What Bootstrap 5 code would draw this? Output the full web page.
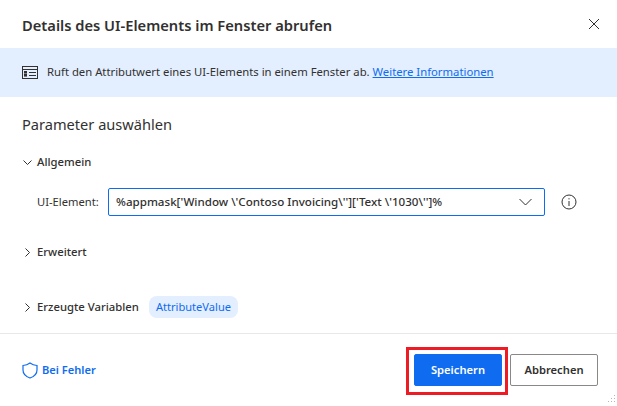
<!DOCTYPE html>
<html lang="de">
<head>
  <meta charset="UTF-8">
  <meta name="viewport" content="width=device-width, initial-scale=1.0">
  <title>Details des UI-Elements im Fenster abrufen</title>
  <link href="https://cdn.jsdelivr.net/npm/bootstrap@5.3.0/dist/css/bootstrap.min.css" rel="stylesheet">
  <style>
    html, body {
      height: 100%;
    }
    body {
      font-family: "Noto Sans", "Open Sans", sans-serif;
      font-size: 11.2px;
      color: #323130;
      background: #fff;
      overflow: hidden;
    }
    .dlg {
      width: 617px;
      height: 406px;
      position: relative;
    }
    .dlg-head {
      height: 48px;
      padding: 0 17px 0 22px;
    }
    .dlg-title {
      font-size: 14.7px;
      font-weight: 600;
      line-height: 20px;
      margin: 2px 0 0;
    }
    .info-band {
      height: 49px;
      padding-left: 22px;
      gap: 9px;
      background: #e3eeff;
      font-size: 11.3px;
    }
    .info-band a {
      color: #0f6cf0;
    }
    .param-title {
      font-size: 14.6px;
      line-height: 20px;
      margin: 17px 0 0 22px;
      font-weight: 400;
    }
    .sec-row {
      padding-left: 23px;
      height: 20px;
      gap: 5px;
      font-weight: 500;
      font-size: 11.3px;
    }
    .sec-row svg {
      flex: none;
    }
    .sec-general {
      margin-top: 18px;
    }
    .sec-advanced {
      margin-top: 25px;
    }
    .sec-vars {
      margin-top: 35px;
    }
    .field-row {
      height: 30px;
      padding-left: 37px;
      margin-top: 15px;
    }
    .field-label {
      width: 71px;
      flex: none;
      font-size: 11.2px;
    }
    .fake-combo {
      width: 437px;
      height: 28px;
      border: 1px solid #0f6cf0;
      border-radius: 2px;
      padding: 0 12px 0 7px;
      font-size: 11.6px;
      font-weight: 500;
    }
    .var-pill {
      background: #e3eeff;
      color: #0f6cf0;
      border-radius: 8px;
      height: 22px;
      padding: 0 7px;
      font-weight: 400;
      font-size: 11.1px;
      margin-left: 5px;
    }
    .dlg-foot {
      position: relative;
      border-top: 1px solid #e8e8e8;
      height: 73px;
      margin-top: 16px;
      padding: 20px 19px 0 22px;
    }
    .err-link {
      color: #0f6cf0;
      font-weight: 600;
      text-decoration: none;
      font-size: 11.1px;
      height: 32px;
    }
    .btn-save, .btn-cancel {
      height: 32px;
      width: 88px;
      padding: 0;
      border-radius: 2px;
      font-size: 11.2px;
      font-weight: 600;
    }
    .btn-save {
      background: #0f6cf0;
      border: 1px solid #0f6cf0;
      color: #fff;
    }
    .btn-cancel {
      background: #fff;
      border: 1px solid #8a8886;
      color: #323130;
    }
    .red-frame {
      position: absolute;
      left: 406px;
      top: 13px;
      width: 102px;
      height: 48px;
      border: 3px solid #ed1c24;
    }
    .grip {
      position: absolute;
      right: 1px;
      bottom: 1px;
    }
  </style>
</head>
<body>
  <div class="dlg">
    <!-- Kopf -->
    <div class="dlg-head d-flex align-items-center justify-content-between">
      <h1 class="dlg-title">Details des UI-Elements im Fenster abrufen</h1>
      <svg width="12" height="12" viewBox="0 0 12 12" fill="none" stroke="#323130" stroke-width="1"><path d="M1 1l10 10M11 1L1 11"/></svg>
    </div>

    <!-- Hinweis -->
    <div class="info-band d-flex align-items-center">
      <svg width="16" height="13" viewBox="0 0 16 13" fill="none" stroke="#323130" stroke-width="1"><rect x=".5" y=".5" width="15" height="12"/><path d="M.5 3.500h15M7 6.500h7M7 9.500h7"/><rect x="2.500" y="5.500" width="2" height="1.600"/><rect x="2.500" y="8.500" width="2" height="1.600"/></svg>
      <span>Ruft den Attributwert eines UI-Elements in einem Fenster ab. <a href="#">Weitere Informationen</a></span>
    </div>

    <h2 class="param-title">Parameter auswählen</h2>

    <!-- Allgemein -->
    <div class="sec-row sec-general d-flex align-items-center">
      <svg width="9" height="9" viewBox="0 0 9 9" fill="none" stroke="#323130"><path d="M.5 2.500l4 4 4-4"/></svg>
      <span>Allgemein</span>
    </div>
    <div class="field-row d-flex align-items-center">
      <span class="field-label">UI-Element:</span>
      <div class="fake-combo d-flex align-items-center justify-content-between">
        <span>%appmask['Window \'Contoso Invoicing\'']['Text \'1030\'']%</span>
        <svg width="13" height="8" viewBox="0 0 13 8" fill="none" stroke="#323130"><path d="M.5 1l6 6 6-6"/></svg>
      </div>
      <svg class="ms-3" width="16" height="16" viewBox="0 0 16 16" fill="none" stroke="#323130"><circle cx="8" cy="8" r="7"/><path d="M8 7v5M8 4.200v1.200"/></svg>
    </div>

    <!-- Erweitert -->
    <div class="sec-row sec-advanced d-flex align-items-center">
      <svg width="9" height="9" viewBox="0 0 9 9" fill="none" stroke="#323130"><path d="M2.500.5l4 4-4 4"/></svg>
      <span>Erweitert</span>
    </div>

    <!-- Variablen -->
    <div class="sec-row sec-vars d-flex align-items-center">
      <svg width="9" height="9" viewBox="0 0 9 9" fill="none" stroke="#323130"><path d="M2.500.5l4 4-4 4"/></svg>
      <span>Erzeugte Variablen</span>
      <span class="var-pill d-flex align-items-center">AttributeValue</span>
    </div>

    <!-- Fuss -->
    <div class="dlg-foot d-flex justify-content-between">
      <a href="#" class="err-link d-flex align-items-center gap-1 align-self-start">
        <svg width="16" height="17" viewBox="0 0 16 17" fill="none" stroke="#0f6cf0" stroke-width="1.2"><path d="M8 1c2 1.500 4 2.300 7 2.500V8c0 3.800-2.500 6.500-7 8-4.500-1.500-7-4.200-7-8V3.500C4 3.300 6 2.500 8 1z"/></svg>
        Bei Fehler
      </a>
      <div class="d-flex gap-2">
        <button type="button" class="btn btn-save">Speichern</button>
        <button type="button" class="btn btn-cancel">Abbrechen</button>
      </div>
      <span class="red-frame"></span>
    </div>
    <svg class="grip" width="10" height="10" viewBox="0 0 10 10" fill="#b5b5b5"><rect x="8" y="0" width="1" height="1"/><rect x="8" y="3" width="1" height="1"/><rect x="5" y="3" width="1" height="1"/><rect x="8" y="6" width="1" height="1"/><rect x="5" y="6" width="1" height="1"/><rect x="2" y="6" width="1" height="1"/></svg>
  </div>

  <script src="https://cdn.jsdelivr.net/npm/bootstrap@5.3.0/dist/js/bootstrap.bundle.min.js"></script>
</body>
</html>
